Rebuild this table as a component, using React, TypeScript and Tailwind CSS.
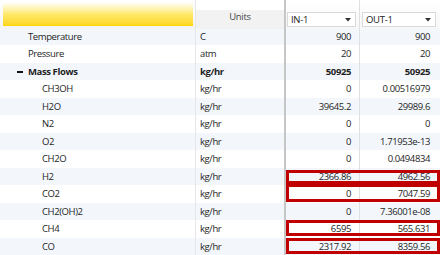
import React from "react";

type Row = {
  name: string;
  unit: string;
  a: string;
  b: string;
  level: 0 | 1 | 2;
  bold?: boolean;
  box?: string;
  h: string;
};

const rows: Row[] = [
  { name: "Temperature", unit: "C", a: "900", b: "900", level: 0, h: "h-[16px]" },
  { name: "Pressure", unit: "atm", a: "20", b: "20", level: 0, h: "h-[17.5px]" },
  { name: "Mass Flows", unit: "kg/hr", a: "50925", b: "50925", level: 1, bold: true, h: "h-[17.5px]" },
  { name: "CH3OH", unit: "kg/hr", a: "0", b: "0.00516979", level: 2, h: "h-[17.5px]" },
  { name: "H2O", unit: "kg/hr", a: "39645.2", b: "29989.6", level: 2, h: "h-[17.5px]" },
  { name: "N2", unit: "kg/hr", a: "0", b: "0", level: 2, h: "h-[17.5px]" },
  { name: "O2", unit: "kg/hr", a: "0", b: "1.71953e-13", level: 2, h: "h-[17.5px]" },
  { name: "CH2O", unit: "kg/hr", a: "0", b: "0.0494834", level: 2, h: "h-[17.5px]" },
  { name: "H2", unit: "kg/hr", a: "2366.86", b: "4962.56", level: 2, box: "top-[2.5px] bottom-[1px]", h: "h-[17.5px]" },
  { name: "CO2", unit: "kg/hr", a: "0", b: "7047.59", level: 2, box: "top-[-1px] bottom-[0.5px]", h: "h-[17.5px]" },
  { name: "CH2(OH)2", unit: "kg/hr", a: "0", b: "7.36001e-08", level: 2, h: "h-[17.5px]" },
  { name: "CH4", unit: "kg/hr", a: "6595", b: "565.631", level: 2, box: "top-[0px] bottom-[1.5px]", h: "h-[17.5px]" },
  { name: "CO", unit: "kg/hr", a: "2317.92", b: "8359.56", level: 2, box: "top-[0.5px] bottom-[1.5px]", h: "h-[17.5px]" },
];

function Dropdown({ label }: { label: string }) {
  return (
    <div className="flex h-[15px] w-full items-center justify-between border border-[#d9d9d9] bg-white pl-[3px] pr-[4px]">
      <span className="text-[9.5px] tracking-[-0.3px] leading-none text-[#222]">{label}</span>
      <svg width="6" height="4" viewBox="0 0 6 4" className="mt-[1px]">
        <path d="M0 0 L6 0 L3 3.5 Z" fill="#333" />
      </svg>
    </div>
  );
}

export default function App() {
  return (
    <div
      className="w-[440px] h-[255px] overflow-hidden bg-white text-[#1e1e1e]"
      style={{ fontFamily: '"Open Sans", "Noto Sans", sans-serif' }}
    >
      {/* header */}
      <div className="flex h-[29px]">
        <div className="w-[196px] shrink-0 bg-gradient-to-b from-white to-[#f3f3f3] p-[3px] border-r border-[#e6e6e6]">
          <div className="h-full w-[190px] bg-gradient-to-b from-[#fffdf0] via-[#ffe866] to-[#ffd600]" />
        </div>
        <div className="w-[90px] shrink-0 flex flex-col border-r-2 border-[#c6c6c6]">
          <div className="h-[10px] bg-white" />
          <div className="flex-1 bg-[#f2f2f2] flex items-start justify-center pt-[1px]">
            <span className="text-[9.5px] tracking-[-0.3px] leading-[12px] text-[#444]">Units</span>
          </div>
        </div>
        <div className="w-[74px] shrink-0 border-r border-[#e0e0e0] bg-gradient-to-b from-white to-[#f7f7f7] flex items-end pb-[2px] pl-[1px] pr-[3px]">
          <Dropdown label="IN-1" />
        </div>
        <div className="flex-1 bg-gradient-to-b from-white to-[#f7f7f7] flex items-end pb-[2px] pl-[2px] pr-[4px]">
          <Dropdown label="OUT-1" />
        </div>
      </div>

      {rows.map((r, i) => (
        <div
          key={r.name}
          className={`relative flex ${r.h} text-[9.5px] tracking-[-0.4px] ${i % 2 === 0 ? "bg-[#f3f7fc]" : "bg-white"} ${r.bold ? "font-bold" : ""}`}
        >
          <div
            className={`w-[196px] shrink-0 flex items-center pt-[1px] border-r border-[#e6e6e6] ${
              r.level === 0 ? "pl-[28px]" : r.level === 1 ? "pl-[17px]" : "pl-[42px]"
            }`}
          >
            {r.level === 1 && <span className="mr-[5px] inline-block h-[2px] w-[6px] bg-[#111]" />}
            <span>{r.name}</span>
          </div>
          <div className="w-[90px] shrink-0 flex items-center pt-[1px] pl-[4px] border-r-2 border-[#c6c6c6]">
            {r.unit}
          </div>
          <div className="w-[74px] shrink-0 flex items-center justify-end pt-[1px] pr-[8px] border-r border-[#e0e0e0]">
            {r.a}
          </div>
          <div className="flex-1 flex items-center justify-end pt-[1px] pr-[10px]">{r.b}</div>
          {r.box && (
            <div className={`absolute left-[286px] right-0 ${r.box} border-[3px] border-[#c00000]`} />
          )}
        </div>
      ))}
    </div>
  );
}
